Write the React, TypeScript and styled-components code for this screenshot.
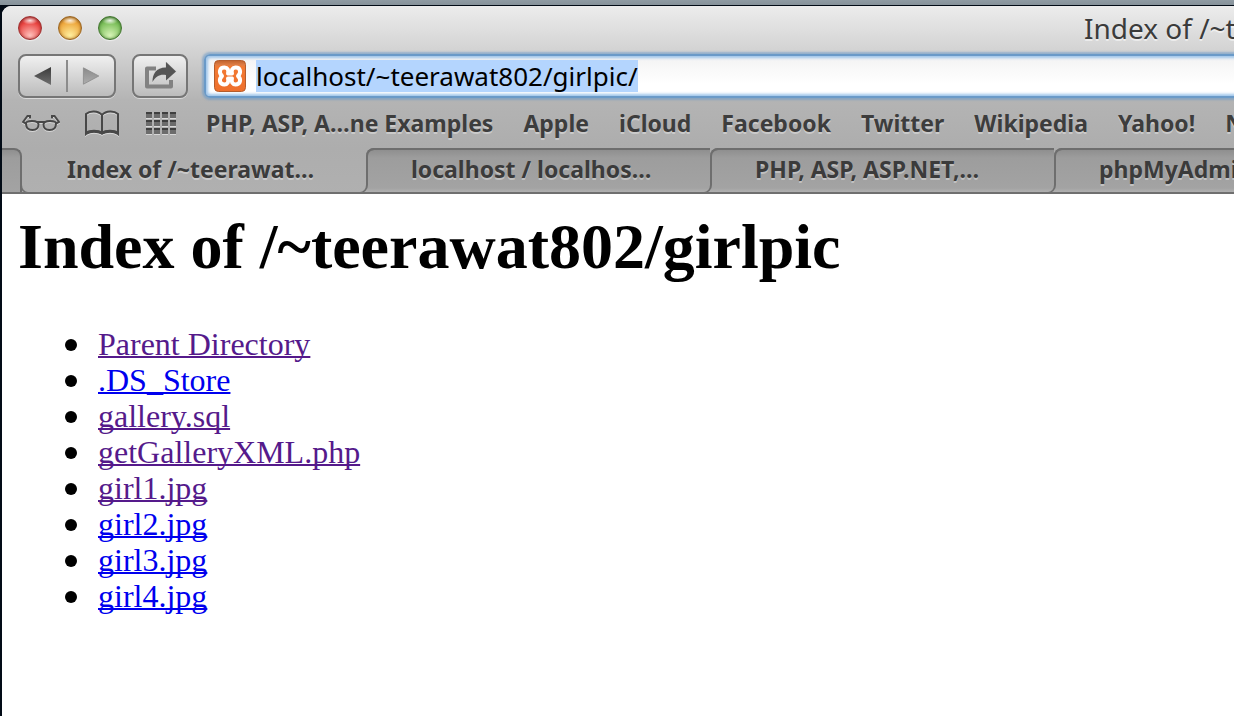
import React, { useEffect, useRef } from "react";
import styled, { createGlobalStyle, css } from "styled-components";

const uiFont = `"Lucida Grande", "Noto Sans", "Open Sans", sans-serif`;

const GlobalStyle = createGlobalStyle`
  * { box-sizing: border-box; }
  html, body { margin: 0; }
  body { background: #020b16; }
`;

const Desktop = styled.div`
  min-height: 100vh;
  padding: 6px 0 0 2px;
  background: linear-gradient(#8f9ba3 0, #87929a 5px, #020b16 5px);
  display: flex;
  flex-direction: column;
`;

const BrowserWindow = styled.section`
  flex: 1;
  display: flex;
  flex-direction: column;
  overflow: clip;
  border-top-left-radius: 9px;
  background: #fff;
`;

const Chrome = styled.header`
  font-family: ${uiFont};
  color: #3b3b3b;
  background: linear-gradient(#ececec 0, #d2d2d2 46px, #b4b4b4 94px, #adadad 142px, #b0b0b0 100%);
`;

const TitleBar = styled.div`
  height: 44px;
  display: flex;
  align-items: center;
  padding-left: 16px;
`;

const Lights = styled.div`
  display: flex;
  gap: 16px;
`;

const Light = styled.button<{ $edge: string; $mid: string; $glow: string }>`
  width: 24px;
  height: 24px;
  padding: 0;
  border: 1px solid ${(p) => p.$edge};
  border-radius: 50%;
  background:
    radial-gradient(ellipse 8px 4px at 50% 16%, rgba(255, 255, 255, 0.85), rgba(255, 255, 255, 0)),
    radial-gradient(circle at 50% 85%, ${(p) => p.$glow} 0, ${(p) => p.$mid} 65%, ${(p) => p.$edge} 100%);
  box-shadow: inset 0 0 3px ${(p) => p.$edge}, 0 1px 1px rgba(255, 255, 255, 0.6);
`;

const WindowTitle = styled.div`
  flex: 0 0 150px;
  margin-left: auto;
  overflow: hidden;
  white-space: nowrap;
  font-size: 28px;
  line-height: 36px;
  text-shadow: 0 2px 0 rgba(255, 255, 255, 0.5);
`;

const Toolbar = styled.div`
  display: flex;
  align-items: center;
  gap: 16px;
  height: 52px;
  padding-left: 16px;
`;

const buttonFace = css`
  height: 44px;
  border: 2px solid #767676;
  border-radius: 8px;
  background: linear-gradient(#f0f0f0, #d6d6d6 50%, #bcbcbc);
  box-shadow: 0 1px 0 rgba(255, 255, 255, 0.5);
`;

const NavGroup = styled.div`
  ${buttonFace}
  width: 98px;
  display: flex;
  align-items: center;
`;

const NavButton = styled.button`
  flex: 1;
  height: 32px;
  padding: 0;
  border: 0;
  background: none;
  display: flex;
  align-items: center;
  justify-content: center;

  & + & {
    border-left: 2px solid #8c8c8c;
  }
`;

const ShareButton = styled.button`
  ${buttonFace}
  width: 56px;
  padding: 0;
  display: flex;
  align-items: center;
  justify-content: center;
`;

const AddressField = styled.label`
  flex: 1;
  height: 44px;
  display: flex;
  align-items: center;
  gap: 10px;
  padding-left: 8px;
  margin-right: -8px;
  border: 2px solid #6a9ac8;
  border-radius: 6px;
  background: linear-gradient(#f3f3f3, #fff 70%);
  box-shadow: 0 0 2px 2px rgba(106, 154, 200, 0.6), inset 0 0 3px 2px #9dc4ea;
`;

const AddressInput = styled.input`
  flex: 1;
  min-width: 0;
  height: 32px;
  padding: 0;
  border: 0;
  outline: 0;
  background: none;
  font-family: ${uiFont};
  font-size: 26px;
  line-height: 32px;
  color: #000;

  &::selection {
    background: #b4d5fe;
    color: #000;
  }
`;

const BookmarksBar = styled.nav`
  height: 46px;
  display: flex;
  align-items: center;
  padding: 0 0 4px 20px;
  overflow: hidden;
`;

const BarIcons = styled.div`
  flex: none;
  display: flex;
  align-items: center;
  gap: 25px;
  margin-right: 30px;
`;

const IconButton = styled.button`
  display: flex;
  padding: 0;
  border: 0;
  background: none;
  filter: drop-shadow(0 1px 0 rgba(255, 255, 255, 0.5));
`;

const Bookmarks = styled.div`
  display: flex;
  gap: 30px;
`;

const Bookmark = styled.a`
  flex: none;
  font-size: 23px;
  line-height: 32px;
  font-weight: 700;
  color: #3d3d3d;
  text-decoration: none;
  white-space: nowrap;
  text-shadow: 0 2px 0 rgba(255, 255, 255, 0.35);
`;

const TabBar = styled.div`
  height: 46px;
  display: flex;
  overflow: hidden;
  border-bottom: 2px solid #6f6f6f;
`;

const Tab = styled.button<{ $active?: boolean }>`
  position: relative;
  flex: none;
  width: 344px;
  padding: 0 0 4px 45px;
  border: 0 solid #6e6e6e;
  border-top: 2px solid ${(p) => (p.$active ? "transparent" : "#6e6e6e")};
  border-radius: ${(p) => (p.$active ? "0" : "8px 0 0 0")};
  text-align: left;
  font-family: ${uiFont};
  font-size: 23px;
  line-height: 32px;
  font-weight: 700;
  color: #3b3b3b;
  white-space: nowrap;
  text-shadow: 0 2px 0 rgba(255, 255, 255, 0.35);
  background: ${(p) =>
    p.$active ? "none" : "linear-gradient(#8f8f8f, #9d9d9d 8px, #a3a3a3 38px, #b0b0b0 42px)"};

  &::before {
    content: "";
    position: absolute;
    border: 0 solid #6e6e6e;
    width: 8px;
    ${(p) =>
      p.$active
        ? css`
            left: -2px;
            bottom: -1px;
            height: 10px;
            border-width: 0 0 1px 2px;
            border-radius: 0 0 0 8px;
          `
        : css`
            left: 0;
            top: -2px;
            bottom: 8px;
            border-width: 2px 0 0 2px;
            border-radius: 8px 0 0 0;
          `}
  }

  &::after {
    content: "";
    position: absolute;
    z-index: 1;
    right: -2px;
    top: 8px;
    bottom: -1px;
    width: 8px;
    border: 0 solid #6e6e6e;
    border-width: 0 2px 1px 0;
    border-radius: 0 0 8px 0;
  }
`;

const TabStub = styled.button`
  flex: none;
  width: 20px;
  padding: 0;
  border: 0 solid #6e6e6e;
  border-width: 2px 2px 0 0;
  border-radius: 0 8px 0 0;
  background: linear-gradient(#8f8f8f, #9d9d9d 8px, #a3a3a3);
`;

const Page = styled.main`
  flex: 1;
  padding: 16px;
  background: #fff;
  color: #000;
  font-family: "Liberation Serif", "Times New Roman", serif;
  font-size: 32px;
  line-height: 36px;
`;

const Heading = styled.h1`
  margin: 0 0 42px;
  font-size: 64px;
  line-height: 74px;
`;

const Listing = styled.ul`
  margin: 0;
  padding-left: 47px;
  list-style: none;
`;

const Entry = styled.li`
  display: flex;
  align-items: center;
  gap: 21px;

  &::before {
    content: "";
    width: 12px;
    height: 12px;
    margin-top: 2px;
    border-radius: 50%;
    background: #000;
  }
`;

const FileLink = styled.a<{ $visited?: boolean }>`
  color: ${(p) => (p.$visited ? "#551a8b" : "#0000ee")};
  text-decoration-thickness: 2px;
  text-decoration-skip-ink: none;
`;

const Arrow = ({ back }: { back?: boolean }) => (
  <svg width="18" height="18" viewBox="0 0 18 18" aria-hidden="true">
    <defs>
      <linearGradient id={back ? "ab" : "af"} x1="0" y1="0" x2="0" y2="1">
        <stop offset="0" stopColor={back ? "#3a3a3a" : "#8a8a8a"} />
        <stop offset="1" stopColor={back ? "#707070" : "#adadad"} />
      </linearGradient>
    </defs>
    {back ? (
      <path d="M17 0V18L0 9Z" fill="url(#ab)" />
    ) : (
      <path d="M1.4 .8V17.2L16.8 9Z" fill="url(#af)" stroke="#8a8a8a" strokeWidth=".8" />
    )}
  </svg>
);

const ShareIcon = () => (
  <svg width="34" height="28" viewBox="0 0 34 28" aria-hidden="true">
    <path d="M13 6.5H4V24.500H28V18" fill="none" stroke="#828282" strokeWidth="4" strokeLinejoin="round" />
    <path d="M23 0L33 9.500L23 18.500V13C17 12 13 14 9.500 20C9.500 12 13 5.500 23 5.500Z" fill="#555" stroke="#d4d4d4" strokeWidth="1.200" paintOrder="stroke" />
  </svg>
);

const SiteIcon = () => (
  <svg width="32" height="32" viewBox="0 0 32 32" aria-hidden="true">
    <defs>
      <linearGradient id="site" x1="0" y1="0" x2="0" y2="1">
        <stop offset="0" stopColor="#c0612b" />
        <stop offset=".14" stopColor="#de7d45" />
        <stop offset=".2" stopColor="#f37a33" />
        <stop offset="1" stopColor="#ee6f2c" />
      </linearGradient>
    </defs>
    <rect x=".5" y=".5" width="31" height="31" rx="4" fill="url(#site)" stroke="#b45c2c" />
    <path
      d="M14 13.500H18C17 10 18.500 7.500 21.500 7.500C26.500 7.500 27.500 12.500 24 16C27.500 19.500 26.500 24.500 21.500 24.500C18.500 24.500 17 22 18 18.500H14C15 22 13.500 24.500 10.500 24.500C5.500 24.500 4.500 19.500 8 16C4.500 12.500 5.500 7.500 10.500 7.500C13.500 7.500 15 10 14 13.500Z"
      fill="none"
      stroke="#fff"
      strokeWidth="4"
      strokeLinejoin="round"
    />
  </svg>
);

const GlassesIcon = () => (
  <svg width="38" height="18" viewBox="0 0 38 18" fill="none" stroke="#484848" strokeWidth="2" aria-hidden="true">
    <path d="M4 9.500C4 7.500 6 7 10 7C14.500 7 16.500 8 16.500 10.500C16.500 14 14 16 10.500 16C6.500 16 4 14 4 9.500ZM34 9.500C34 7.500 32 7 28 7C23.500 7 21.500 8 21.500 10.500C21.500 14 24 16 27.500 16C31.500 16 34 14 34 9.500Z" />
    <path d="M15 8H23M4 9.500L1 8L5.500 2L8 2V4.500M34 9.500L37 8L32.500 2L30 2V4.500" />
  </svg>
);

const BookIcon = () => (
  <svg width="36" height="26" viewBox="1 0 36 26" fill="none" stroke="#484848" strokeWidth="2" aria-hidden="true">
    <path d="M18 5V24M18 5C14 .5 6 .5 2 4V24C6 20.500 14 20.500 18 23.500C22 20.500 30 20.500 34 24V4C30 .5 22 .5 18 5Z" />
    <path d="M2 23C6 20.500 14 20.500 18 23C22 20.500 30 20.500 34 23" strokeWidth="3" />
  </svg>
);

const GridIcon = () => (
  <svg width="30" height="22" viewBox="0 0 30 22" aria-hidden="true">
    {[0, 8, 16].map((y) =>
      [0, 8, 16, 24].map((x) => (
        <g key={`${x}-${y}`}>
          <rect x={x} y={y} width="6" height="6" fill="#6c6c6c" />
          <rect x={x} y={y} width="6" height="2" fill="#3f3f3f" />
        </g>
      ))
    )}
  </svg>
);

const bookmarks = ["PHP, ASP, A…ne Examples", "Apple", "iCloud", "Facebook", "Twitter", "Wikipedia", "Yahoo!", "News"];

const tabs = ["Index of /~teerawat…", "localhost / localhos…", "PHP, ASP, ASP.NET,…", "phpMyAdmin"];

const files = [
  { name: "Parent Directory", visited: true },
  { name: ".DS_Store", visited: false },
  { name: "gallery.sql", visited: true },
  { name: "getGalleryXML.php", visited: true },
  { name: "girl1.jpg", visited: true },
  { name: "girl2.jpg", visited: false },
  { name: "girl3.jpg", visited: false },
  { name: "girl4.jpg", visited: false },
];

export default function App() {
  const address = useRef<HTMLInputElement>(null);

  useEffect(() => {
    address.current?.focus({ preventScroll: true });
    address.current?.select();
  }, []);

  return (
    <Desktop>
      <GlobalStyle />
      <BrowserWindow>
        <Chrome>
          <TitleBar>
            <Lights>
              <Light aria-label="Close" $edge="#9c2f2f" $mid="#e8423f" $glow="#ffc2bd" />
              <Light aria-label="Minimize" $edge="#9a6420" $mid="#eda63c" $glow="#fff0a0" />
              <Light aria-label="Zoom" $edge="#41752f" $mid="#79bd58" $glow="#d8f5b8" />
            </Lights>
            <WindowTitle>Index of /~teerawat802/girlpic</WindowTitle>
          </TitleBar>
          <Toolbar>
            <NavGroup>
              <NavButton aria-label="Back"><Arrow back /></NavButton>
              <NavButton aria-label="Forward"><Arrow /></NavButton>
            </NavGroup>
            <ShareButton aria-label="Share"><ShareIcon /></ShareButton>
            <AddressField>
              <SiteIcon />
              <AddressInput ref={address} aria-label="Address" spellCheck={false} defaultValue="localhost/~teerawat802/girlpic/" />
            </AddressField>
          </Toolbar>
          <BookmarksBar>
            <BarIcons>
              <IconButton aria-label="Reading list"><GlassesIcon /></IconButton>
              <IconButton aria-label="Bookmarks"><BookIcon /></IconButton>
              <IconButton aria-label="Top sites"><GridIcon /></IconButton>
            </BarIcons>
            <Bookmarks>
              {bookmarks.map((name) => (
                <Bookmark key={name} href="#">{name}</Bookmark>
              ))}
            </Bookmarks>
          </BookmarksBar>
          <TabBar>
            <TabStub aria-label="Previous tabs" />
            {tabs.map((name, i) => (
              <Tab key={name} $active={i === 0}>{name}</Tab>
            ))}
          </TabBar>
        </Chrome>
        <Page>
          <Heading>Index of /~teerawat802/girlpic</Heading>
          <Listing>
            {files.map((file) => (
              <Entry key={file.name}>
                <FileLink href="#" $visited={file.visited}>{file.name}</FileLink>
              </Entry>
            ))}
          </Listing>
        </Page>
      </BrowserWindow>
    </Desktop>
  );
}
